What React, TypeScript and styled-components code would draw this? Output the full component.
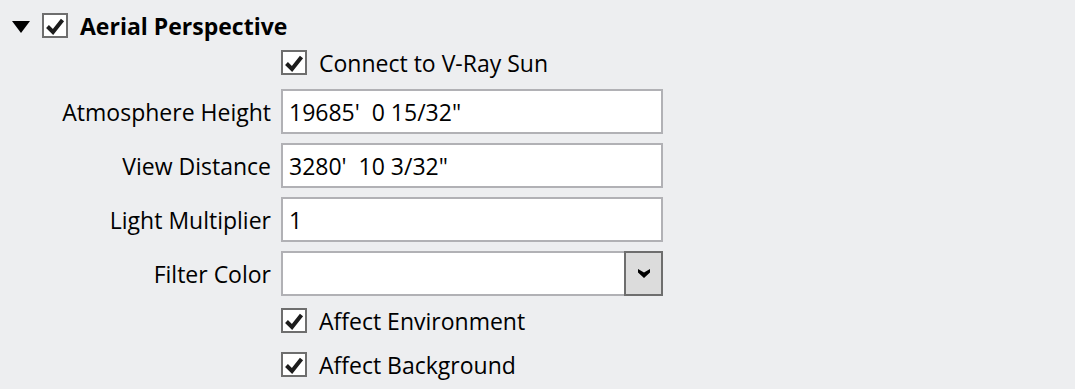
import { Fragment } from "react";
import styled, { createGlobalStyle } from "styled-components";

const GlobalStyle = createGlobalStyle`
  html, body {
    margin: 0;
    padding: 0;
    background: #edeef0;
  }
  body {
    font-family: "Open Sans", "Noto Sans", sans-serif;
    font-size: 23px;
    color: #000;
  }
`;

const CheckMark = () => (
  <svg width="20" height="18" viewBox="0 0 20 18">
    <path d="M2.5 9.5 L8 15 L17.5 3" fill="none" stroke="#1c1c1c" strokeWidth="4" />
  </svg>
);

const Panel = styled.div`
  padding: 13px 0 0 0;
  width: 1075px;
  height: 389px;
  box-sizing: border-box;
`;

const Header = styled.div`
  display: flex;
  align-items: center;
  height: 25px;
  padding-left: 12px;
`;

const Triangle = styled.div`
  width: 0;
  height: 0;
  border-left: 9.5px solid transparent;
  border-right: 9.5px solid transparent;
  border-top: 12px solid #000;
  margin-top: 3px;
  margin-right: 12px;
`;

const Box = styled.div`
  width: 26px;
  height: 25px;
  box-sizing: border-box;
  border: 2px solid #6e6e6e;
  background: #fff;
  display: flex;
  align-items: center;
  justify-content: center;
  flex-shrink: 0;
`;

const Title = styled.span`
  font-weight: 700;
  margin-left: 12px;
`;

const Form = styled.div<{ $top: number }>`
  display: grid;
  grid-template-columns: 271px 382px;
  column-gap: 10px;
  margin-top: ${({ $top }) => $top}px;
`;

const Label = styled.div<{ $gap: number }>`
  text-align: right;
  align-self: center;
  white-space: nowrap;
  margin-top: ${({ $gap }) => $gap}px;
`;

const Field = styled.div<{ $gap: number }>`
  height: 45px;
  margin-top: ${({ $gap }) => $gap}px;
  display: flex;
`;

const TextInput = styled.div`
  flex: 1;
  box-sizing: border-box;
  border: 2px solid #b1b1b5;
  background: #fff;
  padding-left: 6px;
  display: flex;
  align-items: center;
  white-space: pre;
`;

const DropButton = styled.div`
  width: 39px;
  box-sizing: border-box;
  border: 2px solid #6e6e6e;
  background: #dcdcdc;
  display: flex;
  align-items: center;
  justify-content: center;
  margin-left: -2px;
`;

const CheckRow = styled.div<{ $gap: number }>`
  grid-column: 2;
  display: flex;
  align-items: center;
  height: 25px;
  margin-top: ${({ $gap }) => $gap}px;
`;

const CheckText = styled.span`
  margin-left: 12px;
`;

const fields = [
  { label: "Atmosphere Height", value: "19685'  0 15/32\"" },
  { label: "View Distance", value: "3280'  10 3/32\"" },
  { label: "Light Multiplier", value: "1" },
];

export default function App() {
  return (
    <Panel>
      <GlobalStyle />
      <Header>
        <Triangle />
        <Box>
          <CheckMark />
        </Box>
        <Title>Aerial Perspective</Title>
      </Header>
      <Form $top={12}>
        <CheckRow $gap={0}>
          <Box>
            <CheckMark />
          </Box>
          <CheckText>Connect to V-Ray Sun</CheckText>
        </CheckRow>
        {fields.map((f, i) => (
          <Fragment key={f.label}>
            <Label $gap={i === 0 ? 14 : 9}>{f.label}</Label>
            <Field $gap={i === 0 ? 14 : 9}>
              <TextInput>{f.value}</TextInput>
            </Field>
          </Fragment>
        ))}
        <Label $gap={9}>Filter Color</Label>
        <Field $gap={9}>
          <TextInput />
          <DropButton>
            <svg width="12" height="9" viewBox="0 0 12 9">
              <path d="M0 0 L6 3.5 L12 0 L12 3.5 L6 9 L0 3.5 Z" fill="#000" />
            </svg>
          </DropButton>
        </Field>
        <CheckRow $gap={12}>
          <Box>
            <CheckMark />
          </Box>
          <CheckText>Affect Environment</CheckText>
        </CheckRow>
        <CheckRow $gap={19}>
          <Box>
            <CheckMark />
          </Box>
          <CheckText>Affect Background</CheckText>
        </CheckRow>
      </Form>
    </Panel>
  );
}
